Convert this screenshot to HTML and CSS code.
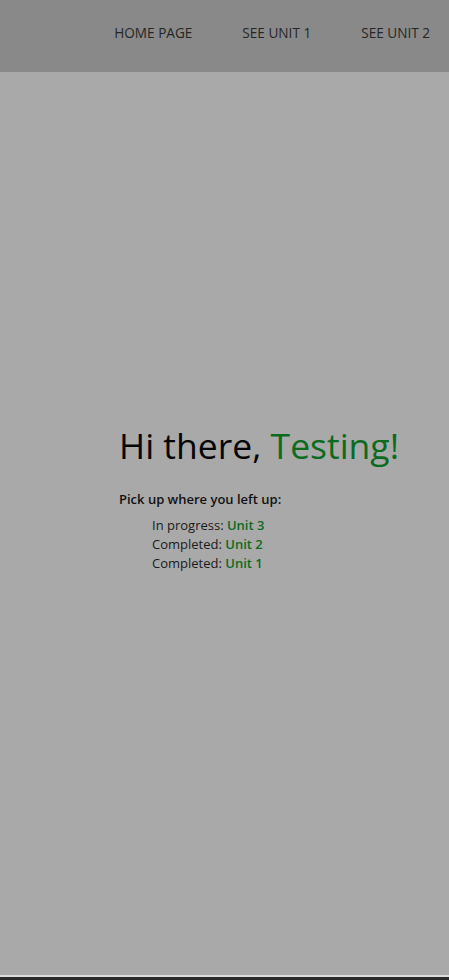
FILE: index.html
```html
<!DOCTYPE html>
<html lang="en">
<head>
<meta charset="utf-8">
<title>Home</title>
<link rel="stylesheet" href="styles.css">
</head>
<body>
<div class="page">
  <header class="topbar">
    <nav class="nav">
      <a class="nav-link" href="#">HOME PAGE</a>
      <a class="nav-link" href="#">SEE UNIT 1</a>
      <a class="nav-link" href="#">SEE UNIT 2</a>
    </nav>
  </header>
  <main class="main">
    <section class="welcome">
      <h1 class="greeting">Hi there, <span class="accent">Testing!</span></h1>
      <p class="lead">Pick up where you left up:</p>
      <ul class="units">
        <li class="unit">In progress: <a class="unit-link" href="#">Unit 3</a></li>
        <li class="unit">Completed: <a class="unit-link" href="#">Unit 2</a></li>
        <li class="unit">Completed: <a class="unit-link" href="#">Unit 1</a></li>
      </ul>
    </section>
  </main>
  <footer class="bottom">
    <div class="bottom-light"></div>
    <div class="bottom-dark"></div>
  </footer>
</div>
</body>
</html>
```
FILE: styles.css
```css
* { box-sizing: border-box; }
html, body { margin: 0; padding: 0; height: 100%; }
body {
  font-family: "Open Sans", "DejaVu Sans", sans-serif;
  background: #a9a9a9;
  color: #111;
}
.page {
  display: flex;
  flex-direction: column;
  height: 980px;
}
.topbar {
  height: 72px;
  background: #898989;
  display: flex;
  justify-content: flex-end;
  align-items: center;
  padding-right: 19px;
  flex-shrink: 0;
}
.nav {
  display: flex;
  gap: 50px;
  margin-top: -8px;
}
.nav-link {
  color: #262626;
  text-decoration: none;
  font-size: 13.6px;
  font-weight: 500;
}
.main {
  flex: 1;
  background: #a9a9a9;
  padding: 351px 0 0 119px;
}
.greeting {
  margin: 0;
  font-size: 35.5px;
  font-weight: 500;
  line-height: 44px;
  color: #050505;
}
.accent { color: #0b6b1e; }
.lead {
  margin: 23px 0 0;
  font-size: 13px;
  font-weight: 600;
  line-height: 18px;
  color: #111;
}
.units {
  list-style: none;
  margin: 8px 0 0;
  padding: 0 0 0 33px;
}
.unit {
  font-size: 13px;
  line-height: 19px;
  color: #1a1a1a;
}
.unit-link {
  color: #0b6b1e;
  font-weight: 600;
  text-decoration: none;
}
.bottom { flex-shrink: 0; }
.bottom-light { height: 2px; background: #dcdcdc; }
.bottom-dark { height: 3px; background: #2b2b2b; }
```
